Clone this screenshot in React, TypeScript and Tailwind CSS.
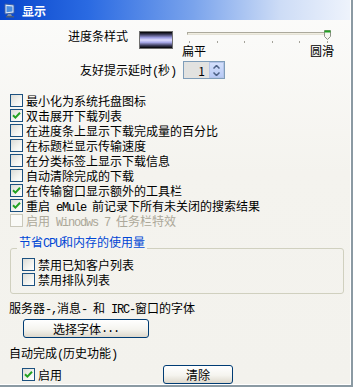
import React from 'react';

// 半角拉丁字符（宋体风格等宽）
function L({ children }: { children: React.ReactNode }) {
  return <span className="font-['Liberation_Mono',monospace] text-[12px] leading-[12px] tracking-[-1.2px]">{children}</span>;
}

function Box({ checked = false, disabled = false }: { checked?: boolean; disabled?: boolean }) {
  return (
    <span
      className={`flex h-[13px] w-[13px] shrink-0 items-center justify-center border ${
        disabled
          ? 'border-[#cac8bb] bg-[#fafaf7]'
          : 'border-[#1c5180] bg-[linear-gradient(135deg,#dcdcd7,#f4f4f0_60%,#ffffff)]'
      }`}
    >
      {checked && (
        <svg width="9" height="9" viewBox="0 0 9 9">
          <path d="M1 4.2 L3.4 6.6 L8 1.8" stroke="#21a121" strokeWidth="2" fill="none" />
        </svg>
      )}
    </span>
  );
}

function Check({ label, checked, disabled }: { label: React.ReactNode; checked?: boolean; disabled?: boolean }) {
  return (
    <div className="flex h-[15px] items-center gap-[3px]">
      <Box checked={checked} disabled={disabled} />
      <span className={`block h-[15px] leading-[15px] whitespace-nowrap ${disabled ? 'text-[#aca899]' : 'text-black'}`}>{label}</span>
    </div>
  );
}

function XpButton({ children, className }: { children: React.ReactNode; className: string }) {
  return (
    <button
      className={`flex h-[19px] items-center justify-center rounded-[3px] border border-[#003c74] bg-[linear-gradient(to_bottom,#ffffff,#f5f4ef_55%,#ddd8cc)] leading-[15px] text-black ${className}`}
    >
      {children}
    </button>
  );
}

const options: { label: React.ReactNode; checked?: boolean; disabled?: boolean }[] = [
  { label: '最小化为系统托盘图标' },
  { label: '双击展开下载列表', checked: true },
  { label: '在进度条上显示下载完成量的百分比' },
  { label: '在标题栏显示传输速度' },
  { label: '在分类标签上显示下载信息' },
  { label: '自动清除完成的下载' },
  { label: '在传输窗口显示额外的工具栏', checked: true },
  { label: <>重启<L> eMule </L>前记录下所有未关闭的搜索结果</>, checked: true },
  { label: <>启用<L> Winodws 7 </L>任务栏特效</>, disabled: true },
];

export default function App() {
  const ticks = [0, 1, 2, 3, 4, 5];
  return (
    <div className="h-[387px] w-[353px] overflow-hidden border-r-2 border-b-2 border-[#8b9aa3] font-['Noto_Sans_CJK_SC','Liberation_Sans',sans-serif] text-[12px]">
      <div className="flex h-full flex-col border-r border-b border-white bg-[linear-gradient(to_bottom,#fcfcfb,#f4f3ee_45%,#f3f2ed)]">
        {/* 标题栏 */}
        <div className="flex h-[20px] shrink-0 items-center bg-[linear-gradient(to_right,#0846cc,#2a6ae2_25%,#79a3ec_55%,#cddcf6_80%,#eef3fc)] pl-[3px]">
          <svg width="14" height="15" viewBox="0 0 14 15">
            <path d="M2 1 L11 2 L11 10 L2 11 Z" fill="#dfe9f8" stroke="#3a5fa8" strokeWidth="1" />
            <path d="M3.5 3 L9.5 3.6 L9.5 8.6 L3.5 9.2 Z" fill="#4a8de0" />
            <path d="M5 11 L8 11 L9 13 L4 13 Z" fill="#7d8ea8" />
            <rect x="3" y="13" width="8" height="1.5" fill="#4c5d78" />
          </svg>
          <span className="ml-[5px] text-[12px] leading-[15px] font-bold text-white">显示</span>
        </div>

        {/* 进度条样式 */}
        <div className="mt-[11px] flex items-start">
          <span className="-mt-[1px] w-[128px] text-right leading-[12px] text-black">进度条样式</span>
          <div className="ml-[11px] h-[18px] w-[34px] border border-[#6f6f6f] bg-[linear-gradient(to_bottom,#000000,#3a3a58_15%,#9c9ce0_35%,#dedcff_50%,#a8a8e8_65%,#3a3a58_85%,#000000)]" />
          <div className="relative ml-[11px] flex h-[26px] w-[150px] flex-col">
            <div className="mt-[1px] ml-[3px] h-[4px] w-[143px] border border-[#aba99c] border-b-[#e4e2d6] bg-[#f0ede0]" />
            <div className="mt-[6px] ml-[5px] flex w-[139px] justify-between">
              {ticks.map((t) => (
                <span key={t} className="h-[2px] w-[1px] bg-[#a5a39a]" />
              ))}
            </div>
            <div className="-ml-[2px] mt-[2px] flex justify-between leading-[12px] text-black">
              <span>扁平</span>
              <span>圆滑</span>
            </div>
            <svg className="absolute top-[-1px] left-[140px]" width="7" height="10" viewBox="0 0 7 10">
              <path d="M0.5 0.5 H6.5 V6.5 L3.5 9.5 L0.5 6.5 Z" fill="#f6f6f2" stroke="#8e9286" strokeWidth="1" />
              <rect x="0.5" y="0.5" width="6" height="2" fill="#21a121" />
            </svg>
          </div>
        </div>

        {/* 友好提示延时 */}
        <div className="mt-[4px] flex items-start">
          <span className="h-[18px] w-[176px] text-right leading-[18px] text-black">
            友好提示延时<L>(</L>秒<L>)</L>
          </span>
          <div className="ml-[7px] flex h-[18px] w-[42px] items-center border border-[#7f9db9] bg-[#e2e2e0]">
            <span className="flex-1 pr-[4px] text-right leading-[15px] text-black">1</span>
            <div className="flex h-full w-[15px] flex-col border border-[#b4c4e8] bg-[linear-gradient(to_bottom,#d4e0fb,#b7c9f5)]">
              <div className="flex flex-1 items-center justify-center">
                <svg width="7" height="4" viewBox="0 0 7 4">
                  <path d="M0.5 3.5 L3.5 0.5 L6.5 3.5" stroke="#4d6185" strokeWidth="1.5" fill="none" />
                </svg>
              </div>
              <div className="flex flex-1 items-center justify-center">
                <svg width="7" height="4" viewBox="0 0 7 4">
                  <path d="M0.5 0.5 L3.5 3.5 L6.5 0.5" stroke="#4d6185" strokeWidth="1.5" fill="none" />
                </svg>
              </div>
            </div>
          </div>
        </div>

        {/* 选项 */}
        <div className="mt-[14px] flex flex-col pl-[10px]">
          {options.map((o, i) => (
            <Check key={i} label={o.label} checked={o.checked} disabled={o.disabled} />
          ))}
        </div>

        {/* 节省CPU和内存的使用量 */}
        <div className="relative mt-[20px] ml-[10px] h-[46px] w-[334px] rounded-[3px] border border-[#d0d0bf] pt-[8px] pl-[11px]">
          <span className="absolute top-[-13px] left-[6px] bg-[#f5f4ef] px-[2px] leading-[12px] whitespace-nowrap text-[#0046d5]">
            节省<L>CPU</L>和内存的使用量
          </span>
          <Check label="禁用已知客户列表" />
          <Check label="禁用排队列表" />
        </div>

        <div className="mt-[6px] pl-[9px] leading-[15px] whitespace-nowrap text-black">
          服务器<L>-,</L>消息<L>- </L>和<L> IRC-</L>窗口的字体
        </div>
        <XpButton className="mt-[3px] ml-[23px] w-[126px]">
          选择字体<L>...</L>
        </XpButton>

        <div className="mt-[7px] pl-[9px] leading-[15px] text-black">
          自动完成<L>(</L>历史功能<L>)</L>
        </div>
        <div className="mt-[4px] flex h-[19px] items-center pl-[22px]">
          <div className="w-[141px]">
            <Check label="启用" checked />
          </div>
          <XpButton className="w-[70px]">清除</XpButton>
        </div>
      </div>
    </div>
  );
}
